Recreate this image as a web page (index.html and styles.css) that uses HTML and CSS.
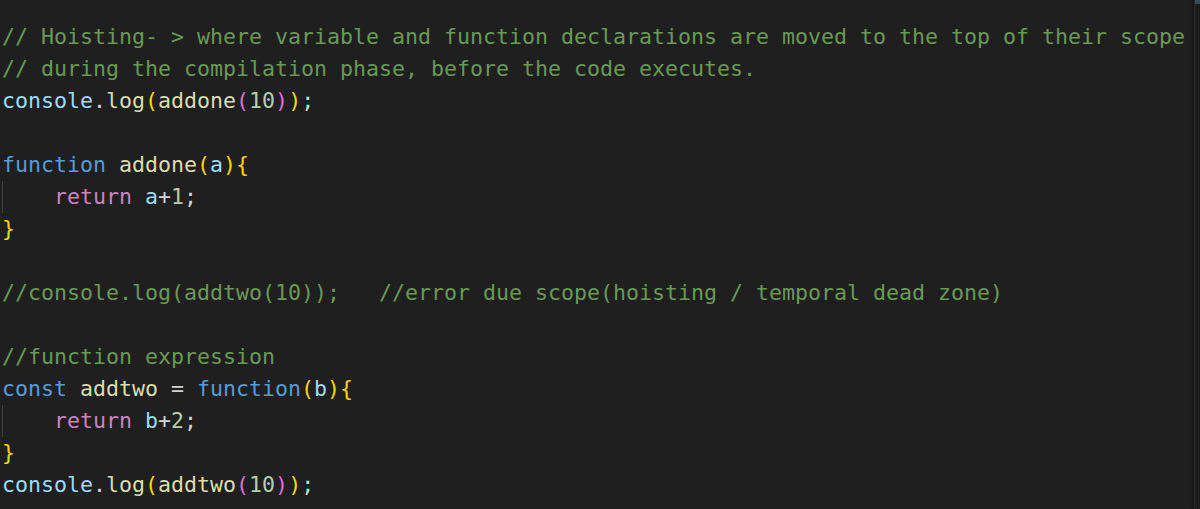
FILE: index.html
```html
<!DOCTYPE html>
<html>
<head>
<meta charset="utf-8">
<link rel="stylesheet" href="styles.css">
</head>
<body>
<div class="editor">
  <div class="code">
    <div class="line"><span class="c">// Hoisting- &gt; where variable and function declarations are moved to the top of their scope</span></div>
    <div class="line"><span class="c">// during the compilation phase, before the code executes.</span></div>
    <div class="line"><span class="v">console</span><span class="p">.</span><span class="f">log</span><span class="b1">(</span><span class="f">addone</span><span class="b2">(</span><span class="n">10</span><span class="b2">)</span><span class="b1">)</span><span class="p">;</span></div>
    <div class="line"> </div>
    <div class="line"><span class="k">function</span><span class="p"> </span><span class="f">addone</span><span class="b1">(</span><span class="v">a</span><span class="b1">){</span></div>
    <div class="line"><span class="guide">    </span><span class="r">return</span><span class="p"> </span><span class="v">a</span><span class="p">+</span><span class="n">1</span><span class="p">;</span></div>
    <div class="line"><span class="b1">}</span></div>
    <div class="line"> </div>
    <div class="line"><span class="c">//console.log(addtwo(10));   //error due scope(hoisting / temporal dead zone)</span></div>
    <div class="line"> </div>
    <div class="line"><span class="c">//function expression</span></div>
    <div class="line"><span class="k">const</span><span class="p"> </span><span class="f">addtwo</span><span class="p"> = </span><span class="k">function</span><span class="b1">(</span><span class="v">b</span><span class="b1">){</span></div>
    <div class="line"><span class="guide">    </span><span class="r">return</span><span class="p"> </span><span class="v">b</span><span class="p">+</span><span class="n">2</span><span class="p">;</span></div>
    <div class="line"><span class="b1">}</span></div>
    <div class="line"><span class="v">console</span><span class="p">.</span><span class="f">log</span><span class="b1">(</span><span class="f">addtwo</span><span class="b2">(</span><span class="n">10</span><span class="b2">)</span><span class="b1">)</span><span class="p">;</span></div>
  </div>
  <div class="scrollbar"><div class="thumb"></div></div>
</div>
</body>
</html>
```
FILE: styles.css
```css
html, body {
  margin: 0;
  padding: 0;
  background: #1f1f1f;
}
.editor {
  display: flex;
  width: 1200px;
  height: 509px;
  overflow: hidden;
  background: #1f1f1f;
}
.code {
  flex: 1;
  padding-top: 21px;
  padding-left: 2px;
  font-family: "DejaVu Sans Mono", "Liberation Mono", monospace;
  font-size: 21.6px;
  color: #d4d4d4;
}
.line {
  height: 32px;
  line-height: 32px;
  white-space: pre;
}
.scrollbar {
  width: 5px;
  border-left: 1px solid #2b2b2b;
  background: #1c1c1c;
  box-shadow: -2px 0 3px rgba(0,0,0,0.35);
}
.thumb {
  height: 4px;
  background: #3a4a5a;
}
.guide {
  display: inline-block;
  box-shadow: inset 1px 0 0 #404040;
}
.c { color: #6a9955; }
.k { color: #569cd6; }
.r { color: #c586c0; }
.f { color: #dcdcaa; }
.v { color: #9cdcfe; }
.n { color: #b5cea8; }
.p { color: #d4d4d4; }
.b1 { color: #ffd700; }
.b2 { color: #da70d6; }
```
